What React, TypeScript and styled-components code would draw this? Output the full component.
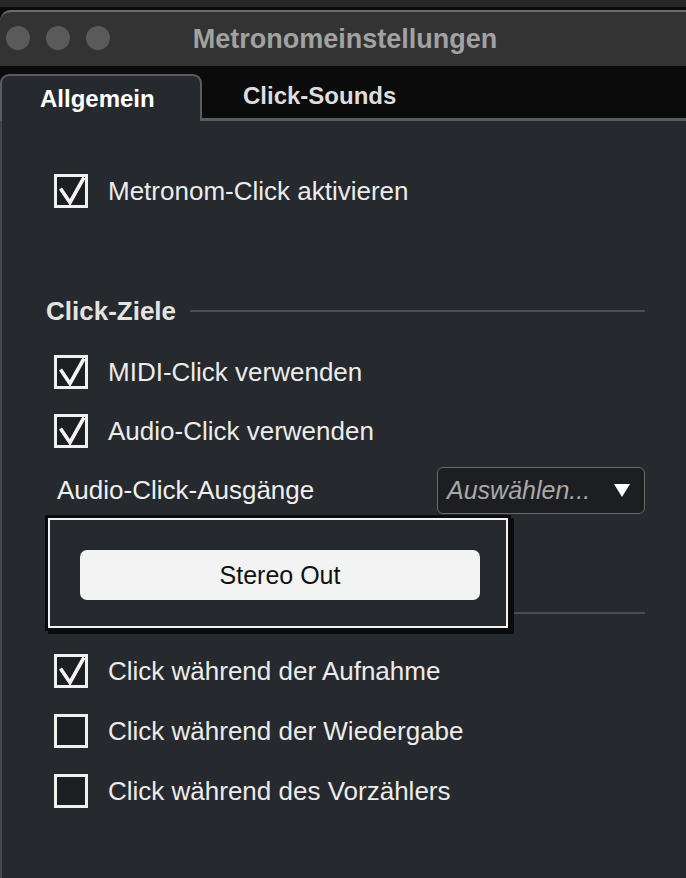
import React from 'react';
import styled, { createGlobalStyle } from 'styled-components';

const GlobalStyle = createGlobalStyle`
    html, body {
        margin: 0;
        padding: 0;
        background: #0b0b0b;
        overflow: hidden;
    }
    body {
        font-family: "Liberation Sans", Arial, Helvetica, sans-serif;
    }
`;

const Screen = styled.div`
    display: flex;
    flex-direction: column;
    height: 100vh;
`;

const DesktopStrip = styled.div`
    height: 7px;
    background: #282828;
    border-bottom: 3px solid #0b0b0b;
`;

const Window = styled.div`
    flex: 1;
    display: flex;
    flex-direction: column;
    background: #0b0b0b;
`;

const TitleBar = styled.div`
    box-sizing: border-box;
    height: 56px;
    display: grid;
    grid-template-columns: 1fr auto 1fr;
    align-items: center;
    background: #333333;
    border-top: 2px solid #6b6b6b;
    border-top-left-radius: 11px;
`;

const TrafficLights = styled.div`
    display: flex;
    gap: 16px;
    padding-left: 6px;
    margin-top: -2px;
`;

const Light = styled.span`
    width: 24px;
    height: 24px;
    border-radius: 50%;
    background: #5a5a5a;
`;

const Title = styled.div`
    font-size: 27px;
    font-weight: bold;
    color: #a2a2a2;
    padding-left: 4px;
`;

const TabBar = styled.div`
    box-sizing: border-box;
    height: 55px;
    display: flex;
    align-items: flex-end;
    padding-top: 8px;
    background: #0b0b0b;
    border-bottom: 3px solid #595b5f;
`;

const Tab = styled.div<{ $active?: boolean }>`
    box-sizing: border-box;
    display: flex;
    align-items: center;
    font-size: 24px;
    font-weight: bold;
    height: ${(p) => (p.$active ? '47px' : '44px')};
    margin-bottom: ${(p) => (p.$active ? '-3px' : '0')};
    width: ${(p) => (p.$active ? '202px' : 'auto')};
    padding-left: ${(p) => (p.$active ? '38px' : '41px')};
    color: ${(p) => (p.$active ? '#ffffff' : '#dedede')};
    background: ${(p) => (p.$active ? '#26292d' : 'transparent')};
    border: ${(p) => (p.$active ? '2.5px solid #595b5f' : 'none')};
    border-bottom: none;
    border-radius: 9px 9px 0 0;
    position: relative;
    z-index: 1;
`;

const Body = styled.div`
    flex: 1;
    display: flex;
    flex-direction: column;
    background: #26292d;
    border-left: 2px solid #47484c;
    padding: 53px 41px 0 44px;
`;

const CheckRow = styled.label<{ $mt?: number }>`
    display: flex;
    align-items: center;
    gap: 20px;
    height: 34px;
    margin-left: 8px;
    margin-top: ${(p) => p.$mt ?? 0}px;
    font-size: 26px;
    color: #ececec;
`;

const Box = styled.span`
    box-sizing: border-box;
    width: 34px;
    height: 34px;
    flex-shrink: 0;
    border: 3px solid #f0f0f0;
    background: #1d1e22;
    position: relative;

    svg {
        position: absolute;
        left: -3px;
        top: -3px;
    }
`;

const SectionHeader = styled.div<{ $mt: number }>`
    display: flex;
    align-items: center;
    gap: 14px;
    height: 30px;
    margin-top: ${(p) => p.$mt}px;
`;

const SectionTitle = styled.span`
    font-size: 26px;
    font-weight: bold;
    color: #e4e4e4;
`;

const Rule = styled.div`
    flex: 1;
    height: 2px;
    background: #4b4e53;
`;

const OutputRow = styled.div`
    position: relative;
    display: flex;
    align-items: center;
    justify-content: space-between;
    height: 47px;
    margin-top: 19px;
`;

const FieldLabel = styled.span`
    margin-left: 11px;
    font-size: 26px;
    color: #efefef;
`;

const Select = styled.div`
    box-sizing: border-box;
    width: 208px;
    height: 47px;
    display: flex;
    align-items: center;
    justify-content: space-between;
    padding: 0 14px 0 9px;
    background: #1d1e21;
    border: 1.5px solid #6b6b6b;
    border-radius: 6px;
`;

const SelectText = styled.span`
    font-size: 25px;
    font-style: italic;
    color: #a9a9a9;
`;

const Popup = styled.div`
    position: absolute;
    top: calc(100% + 1px);
    left: -1px;
    width: 466px;
    box-sizing: border-box;
    padding: 3px;
    background: #0b0b0b;
    box-shadow: 3px 3px 0 #0b0b0b;
    z-index: 2;
`;

const PopupInner = styled.div`
    border: 2px solid #f2f2f2;
    background: #26292d;
    padding: 30px 26px 26px 30px;
`;

const MenuButton = styled.button`
    display: block;
    width: 100%;
    height: 50px;
    border: none;
    border-radius: 7px;
    background: #f3f3f3;
    color: #111111;
    font-family: inherit;
    font-size: 25px;
    cursor: pointer;
`;

const Check: React.FC<{ checked?: boolean }> = ({ checked }) => (
    <Box>
        {checked && (
            <svg width="34" height="34" viewBox="0 0 34 34">
                <path d="M6.5 14.5 L16 28.5 L30 3.5" fill="none" stroke="#f4f4f4" strokeWidth="3.6" strokeLinejoin="miter" />
            </svg>
        )}
    </Box>
);

interface IOption {
    text: string;
    checked: boolean;
    mt: number;
}

const bottomOptions: IOption[] = [
    { text: 'Click während der Aufnahme', checked: true, mt: 26 },
    { text: 'Click während der Wiedergabe', checked: false, mt: 26 },
    { text: 'Click während des Vorzählers', checked: false, mt: 26 },
];

const App: React.FC = () => {
    return (
        <Screen>
            <GlobalStyle />
            <DesktopStrip />
            <Window>
                <TitleBar>
                    <TrafficLights>
                        <Light />
                        <Light />
                        <Light />
                    </TrafficLights>
                    <Title>Metronomeinstellungen</Title>
                    <div />
                </TitleBar>
                <TabBar>
                    <Tab $active>Allgemein</Tab>
                    <Tab>Click-Sounds</Tab>
                </TabBar>
                <Body>
                    <CheckRow>
                        <Check checked />
                        Metronom-Click aktivieren
                    </CheckRow>

                    <SectionHeader $mt={88}>
                        <SectionTitle>Click-Ziele</SectionTitle>
                        <Rule />
                    </SectionHeader>
                    <CheckRow $mt={29}>
                        <Check checked />
                        MIDI-Click verwenden
                    </CheckRow>
                    <CheckRow $mt={25}>
                        <Check checked />
                        Audio-Click verwenden
                    </CheckRow>
                    <OutputRow>
                        <FieldLabel>Audio-Click-Ausgänge</FieldLabel>
                        <Select>
                            <SelectText>Auswählen...</SelectText>
                            <svg width="16" height="14" viewBox="0 0 16 14">
                                <polygon points="0,0 16,0 8,13" fill="#ffffff" />
                            </svg>
                        </Select>
                        <Popup>
                            <PopupInner>
                                <MenuButton type="button">Stereo Out</MenuButton>
                            </PopupInner>
                        </Popup>
                    </OutputRow>

                    <SectionHeader $mt={84}>
                        <Rule />
                    </SectionHeader>
                    {bottomOptions.map((o) => (
                        <CheckRow key={o.text} $mt={o.mt}>
                            <Check checked={o.checked} />
                            {o.text}
                        </CheckRow>
                    ))}
                </Body>
            </Window>
        </Screen>
    );
};

export default App;
